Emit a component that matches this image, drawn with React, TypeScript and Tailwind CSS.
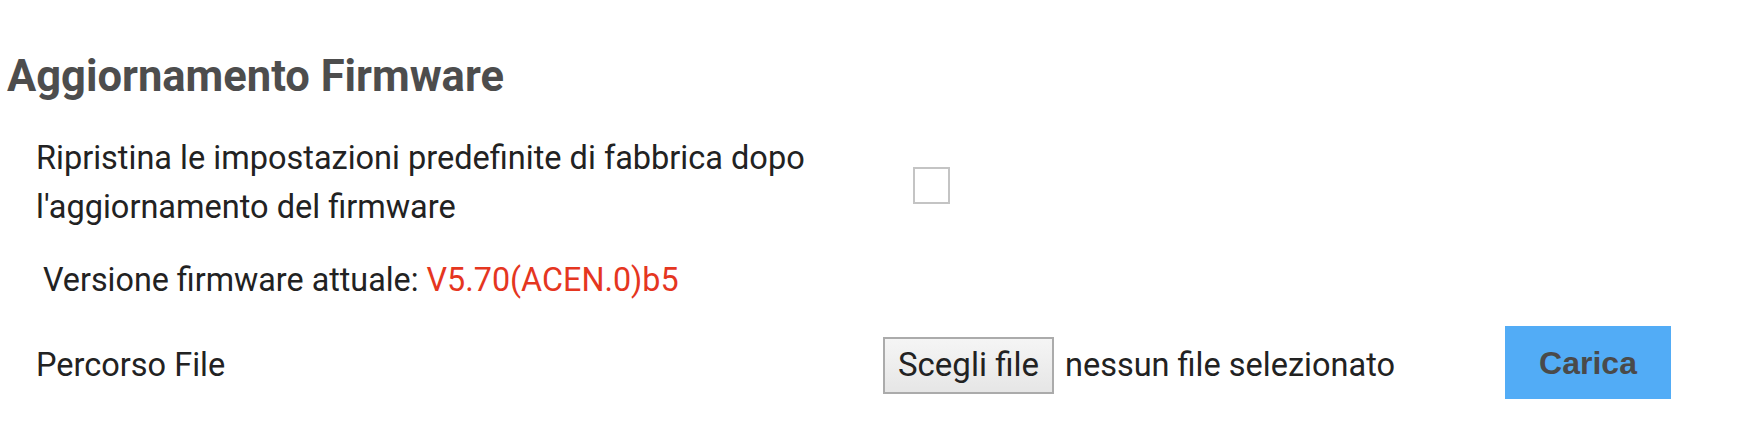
import React from "react";

export default function App() {
  return (
    <div className="w-[1750px] h-[444px] bg-white overflow-hidden font-['Roboto',sans-serif] text-[#222222]">
      <div className="pt-[51px]">
        <h1 className="pl-[7px] text-[43.5px] leading-[52px] font-bold text-[#4d4d4d]">
          Aggiornamento Firmware
        </h1>
        <div className="mt-[31px] pl-[36px] flex items-center">
          <div className="w-[847px] text-[32.5px] leading-[49px]">
            Ripristina le impostazioni predefinite di fabbrica dopo
            <br />
            l'aggiornamento del firmware
          </div>
          <div className="ml-[30px] mt-[4px] w-[37px] h-[37px] border-2 border-[#c4c4c4] bg-white" />
        </div>
        <div className="mt-[24px] pl-[43px] text-[32.3px] leading-[49px]">
          Versione firmware attuale: <span className="text-[#e5361f]">V5.70(ACEN.0)b5</span>
        </div>
        <div className="mt-[21px] pl-[36px] flex items-center h-[73px]">
          <div className="w-[847px] mt-[5px] text-[32.5px] leading-[49px]">Percorso File</div>
          <div className="w-[622px] mt-[5px] flex items-center">
            <div className="h-[57px] px-[13px] flex items-center border-2 border-[#ababab] bg-gradient-to-b from-[#f5f5f5] to-[#e6e6e6] text-[33px] leading-[38px] text-[#222222]">
              Scegli file
            </div>
            <span className="ml-[11px] text-[32.5px] leading-[38px]">nessun file selezionato</span>
          </div>
          <div className="w-[166px] h-[73px] bg-[#52acf6] flex items-center justify-center font-['Liberation_Sans',Arial,sans-serif] font-bold text-[32px] text-[#4a4a4a]">
            Carica
          </div>
        </div>
      </div>
    </div>
  );
}
